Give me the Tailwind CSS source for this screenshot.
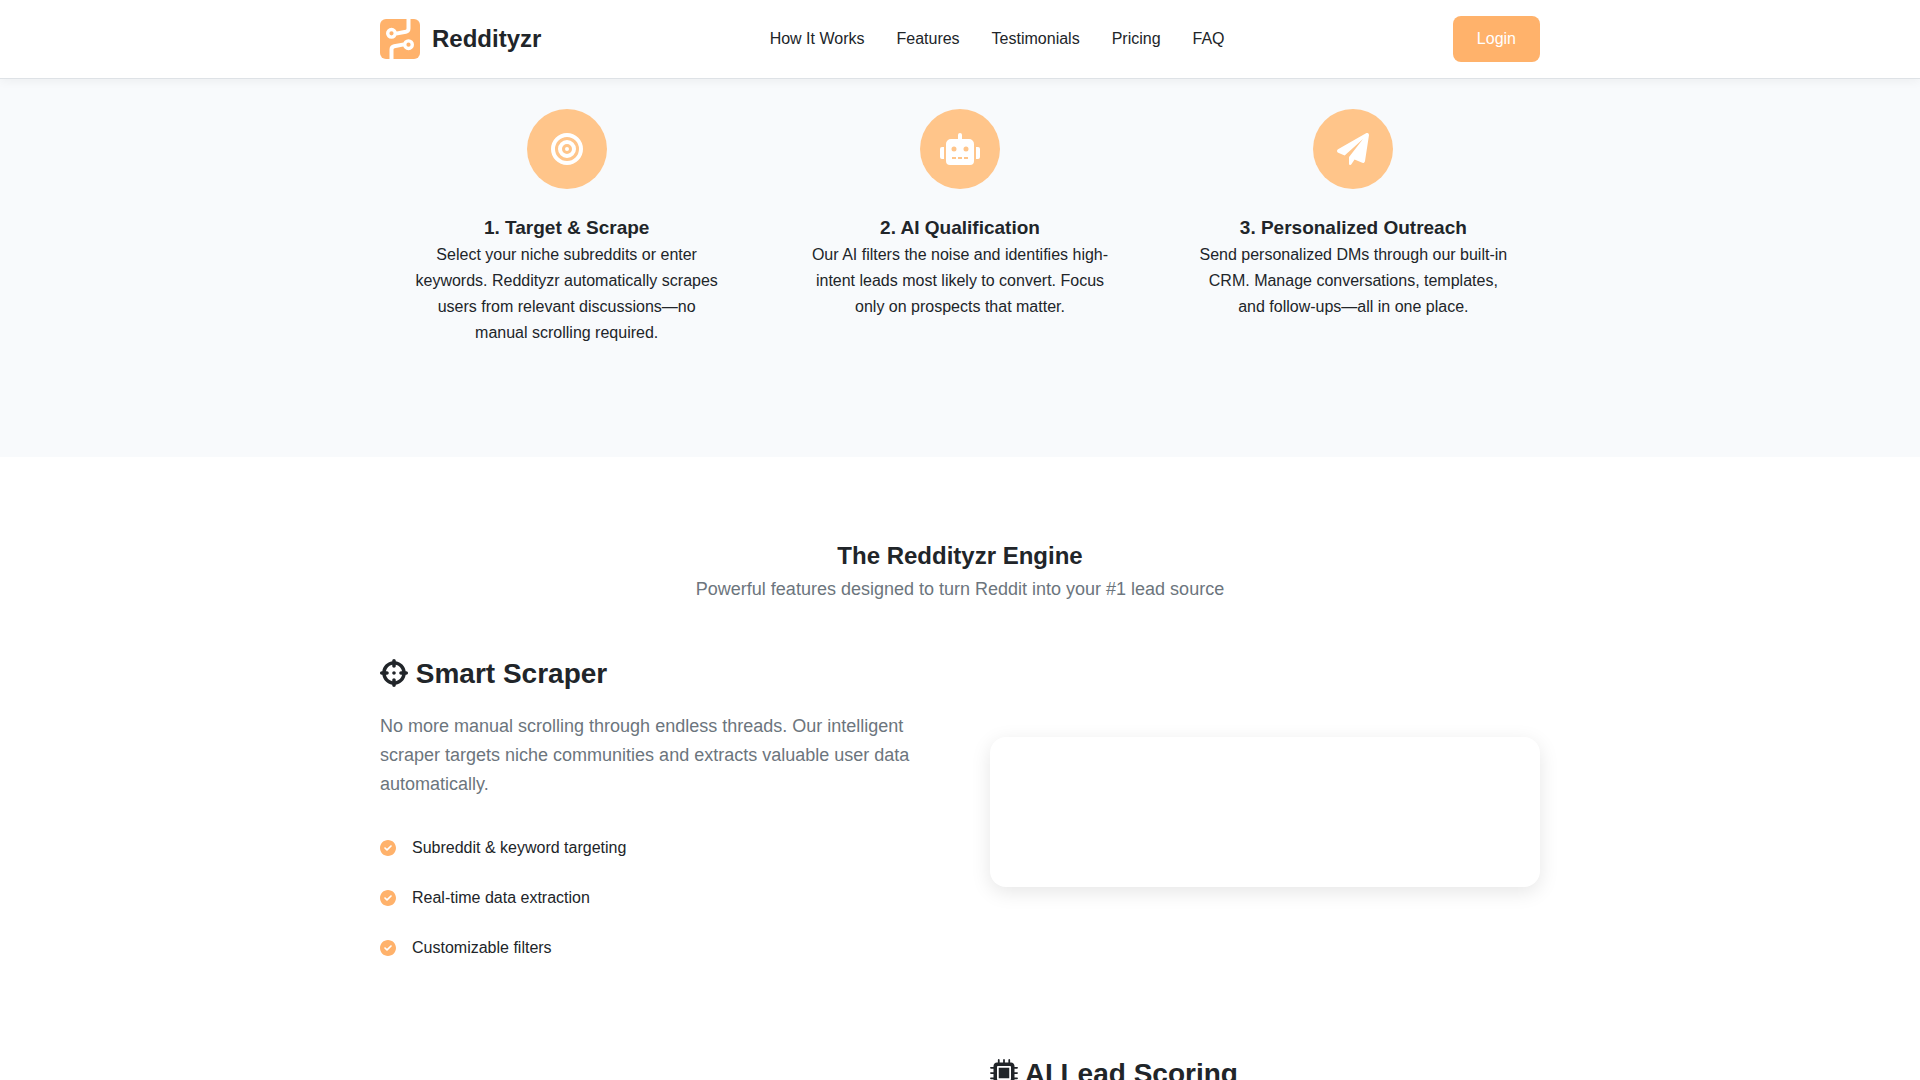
<!DOCTYPE html>
<html lang="en">
<head>
    <meta charset="UTF-8">
    <meta name="viewport" content="width=device-width, initial-scale=1.0">
    <title>Reddityzr</title>
    <script src="https://cdn.jsdelivr.net/npm/@tailwindcss/browser@4"></script>
</head>
<body class="bg-white text-[#212529] text-base leading-[26px] font-['Liberation_Sans',Arial,sans-serif]">

    <!-- Header -->
    <header class="sticky top-0 z-10 bg-white border-b border-[#dee2e6] shadow-[0_2px_10px_rgba(0,0,0,0.05)]">
        <div class="max-w-[1200px] mx-auto px-5 py-4 flex items-center justify-between">
            <a href="#" class="flex items-center gap-3 text-2xl font-bold">
                <svg class="w-10 h-10" viewBox="0 0 40 40" fill="none" aria-hidden="true">
                    <rect width="40" height="40" rx="6" fill="#ffb26b"/>
                    <g stroke="#fff" stroke-width="4">
                        <path d="M28.5 0V9.5Q28.5 12.2 25.8 12.8L16 14.6"/>
                        <circle cx="11.5" cy="14.3" r="3.8" stroke-width="3.4"/>
                        <path d="M11.5 40V30.5Q11.5 27.8 14.2 27.2L24 25.4"/>
                        <circle cx="28.5" cy="25.7" r="3.8" stroke-width="3.4"/>
                    </g>
                </svg>
                <span>Reddityzr</span>
            </a>
            <nav class="flex gap-8">
                <a href="#how" class="hover:text-[#ffb26b]">How It Works</a>
                <a href="#features" class="hover:text-[#ffb26b]">Features</a>
                <a href="#testimonials" class="hover:text-[#ffb26b]">Testimonials</a>
                <a href="#pricing" class="hover:text-[#ffb26b]">Pricing</a>
                <a href="#faq" class="hover:text-[#ffb26b]">FAQ</a>
            </nav>
            <a href="#login" class="bg-[#ffb26b] text-white rounded-lg px-6 py-[10px]">Login</a>
        </div>
    </header>

    <!-- How it works -->
    <section id="how" class="bg-[#f8fafc] pt-[30px] pb-[91px]">
        <div class="max-w-[1200px] mx-auto px-5 grid grid-cols-3 gap-5 text-center">
            <div class="px-8 pb-5">
                <div class="w-20 h-20 mx-auto mb-6 rounded-full bg-[#ffc58a] text-white flex items-center justify-center">
                    <svg class="h-8 w-8" viewBox="0 0 512 512" fill="currentColor" aria-hidden="true"><path d="M448 256A192 192 0 1 0 64 256a192 192 0 1 0 384 0zM0 256a256 256 0 1 1 512 0A256 256 0 1 1 0 256zm256 80a80 80 0 1 0 0-160 80 80 0 1 0 0 160zm0-224a144 144 0 1 1 0 288 144 144 0 1 1 0-288zM224 256a32 32 0 1 1 64 0 32 32 0 1 1 -64 0z"/></svg>
                </div>
                <h3 class="text-[19px] leading-[29px] font-bold">1. Target &amp; Scrape</h3>
                <p>Select your niche subreddits or enter keywords. Reddityzr automatically scrapes users from relevant discussions—no manual scrolling required.</p>
            </div>
            <div class="px-8 pb-5">
                <div class="w-20 h-20 mx-auto mb-6 rounded-full bg-[#ffc58a] text-white flex items-center justify-center">
                    <svg class="h-8 w-10" viewBox="0 0 640 512" fill="currentColor" aria-hidden="true"><path d="M32 224H64V416H32A32 32 0 0 1 0 384V256A32 32 0 0 1 32 224Zm512-48V448a64 64 0 0 1-64 64H160a64 64 0 0 1-64-64V176a80 80 0 0 1 80-80H288V32a32 32 0 0 1 64 0V96H464A80 80 0 0 1 544 176ZM264 256a40 40 0 1 0-40 40A40 40 0 0 0 264 256Zm-8 128H192v32h64Zm96 0H288v32h64ZM456 256a40 40 0 1 0-40 40A40 40 0 0 0 456 256Zm-8 128H384v32h64ZM640 256V384a32 32 0 0 1-32 32H576V224h32A32 32 0 0 1 640 256Z"/></svg>
                </div>
                <h3 class="text-[19px] leading-[29px] font-bold">2. AI Qualification</h3>
                <p>Our AI filters the noise and identifies high-intent leads most likely to convert. Focus only on prospects that matter.</p>
            </div>
            <div class="px-8 pb-5">
                <div class="w-20 h-20 mx-auto mb-6 rounded-full bg-[#ffc58a] text-white flex items-center justify-center">
                    <svg class="h-8 w-8" viewBox="0 0 512 512" fill="currentColor" aria-hidden="true"><path d="M511.6 36.86l-64 415.1c-1.5 9.734-7.375 18.22-15.97 23.05c-4.844 2.719-10.27 4.097-15.68 4.097c-4.188 0-8.319-.8154-12.29-2.472l-122.6-51.1l-50.86 76.29C226.3 508.5 219.8 512 212.8 512C201.3 512 192 502.7 192 491.2v-96.18c0-7.115 2.372-14.03 6.742-19.64L416 96l-293.7 264.3L19.69 317.5C8.438 312.8 .8125 302.2 .0625 289.1s5.469-23.72 16.06-29.77l448-255.1c10.69-6.109 23.88-5.547 34 1.406S513.5 24.72 511.6 36.86z"/></svg>
                </div>
                <h3 class="text-[19px] leading-[29px] font-bold">3. Personalized Outreach</h3>
                <p>Send personalized DMs through our built-in CRM. Manage conversations, templates, and follow-ups—all in one place.</p>
            </div>
        </div>
    </section>

    <!-- Features -->
    <section id="features" class="pt-20">
        <div class="max-w-[1200px] mx-auto px-5">
            <div class="text-center mb-[47px]">
                <h2 class="text-2xl leading-[38px] font-bold">The Reddityzr Engine</h2>
                <p class="text-lg leading-[29px] text-[#6c757d]">Powerful features designed to turn Reddit into your #1 lead source</p>
            </div>

            <div class="grid grid-cols-2 gap-[60px] items-center mb-[78px]">
                <div>
                    <h3 class="text-[28px] leading-[45px] font-bold mb-4">
                        <svg class="inline-block w-7 h-7 align-[-4px]" viewBox="0 0 512 512" fill="currentColor" aria-hidden="true"><path d="M224 256C224 238.3 238.3 224 256 224C273.7 224 288 238.3 288 256C288 273.7 273.7 288 256 288C238.3 288 224 273.7 224 256zM256 0C273.7 0 288 14.33 288 32V42.35C381.7 56.27 455.7 130.3 469.6 224H480C497.7 224 512 238.3 512 256C512 273.7 497.7 288 480 288H469.6C455.7 381.7 381.7 455.7 288 469.6V480C288 497.7 273.7 512 256 512C238.3 512 224 497.7 224 480V469.6C130.3 455.7 56.27 381.7 42.35 288H32C14.33 288 0 273.7 0 256C0 238.3 14.33 224 32 224H42.35C56.27 130.3 130.3 56.27 224 42.35V32C224 14.33 238.3 0 256 0V0zM224 404.6V384C224 366.3 238.3 352 256 352C273.7 352 288 366.3 288 384V404.6C346.3 392.1 392.1 346.3 404.6 288H384C366.3 288 352 273.7 352 256C352 238.3 366.3 224 384 224H404.6C392.1 165.7 346.3 119.9 288 107.4V128C288 145.7 273.7 160 256 160C238.3 160 224 145.7 224 128V107.4C165.7 119.9 119.9 165.7 107.4 224H128C145.7 224 160 238.3 160 256C160 273.7 145.7 288 128 288H107.4C119.9 346.3 165.7 392.1 224 404.6z"/></svg>
                        Smart Scraper
                    </h3>
                    <p class="text-lg leading-[29px] text-[#6c757d] mb-6">No more manual scrolling through endless threads. Our intelligent scraper targets niche communities and extracts valuable user data automatically.</p>
                    <ul>
                        <li class="flex items-center gap-4 py-3">
                            <svg class="w-4 h-4 text-[#ffb26b]" viewBox="0 0 512 512" fill="currentColor" aria-hidden="true"><path d="M0 256C0 114.6 114.6 0 256 0C397.4 0 512 114.6 512 256C512 397.4 397.4 512 256 512C114.6 512 0 397.4 0 256zM371.8 211.8C382.7 200.9 382.7 183.1 371.8 172.2C360.9 161.3 343.1 161.3 332.2 172.2L224 280.4L179.8 236.2C168.9 225.3 151.1 225.3 140.2 236.2C129.3 247.1 129.3 264.9 140.2 275.8L204.2 339.8C215.1 350.7 232.9 350.7 243.8 339.8L371.8 211.8z"/></svg>
                            Subreddit &amp; keyword targeting
                        </li>
                        <li class="flex items-center gap-4 py-3">
                            <svg class="w-4 h-4 text-[#ffb26b]" viewBox="0 0 512 512" fill="currentColor" aria-hidden="true"><path d="M0 256C0 114.6 114.6 0 256 0C397.4 0 512 114.6 512 256C512 397.4 397.4 512 256 512C114.6 512 0 397.4 0 256zM371.8 211.8C382.7 200.9 382.7 183.1 371.8 172.2C360.9 161.3 343.1 161.3 332.2 172.2L224 280.4L179.8 236.2C168.9 225.3 151.1 225.3 140.2 236.2C129.3 247.1 129.3 264.9 140.2 275.8L204.2 339.8C215.1 350.7 232.9 350.7 243.8 339.8L371.8 211.8z"/></svg>
                            Real-time data extraction
                        </li>
                        <li class="flex items-center gap-4 py-3">
                            <svg class="w-4 h-4 text-[#ffb26b]" viewBox="0 0 512 512" fill="currentColor" aria-hidden="true"><path d="M0 256C0 114.6 114.6 0 256 0C397.4 0 512 114.6 512 256C512 397.4 397.4 512 256 512C114.6 512 0 397.4 0 256zM371.8 211.8C382.7 200.9 382.7 183.1 371.8 172.2C360.9 161.3 343.1 161.3 332.2 172.2L224 280.4L179.8 236.2C168.9 225.3 151.1 225.3 140.2 236.2C129.3 247.1 129.3 264.9 140.2 275.8L204.2 339.8C215.1 350.7 232.9 350.7 243.8 339.8L371.8 211.8z"/></svg>
                            Customizable filters
                        </li>
                    </ul>
                </div>
                <div class="h-[150px] rounded-2xl bg-white shadow-[0_5px_20px_rgba(0,0,0,0.1)]"></div>
            </div>

            <div class="grid grid-cols-2 gap-[60px]">
                <div class="col-start-2">
                    <h3 class="text-[28px] leading-[45px] font-bold">
                        <svg class="inline-block w-7 h-7 align-[-4px]" viewBox="0 0 512 512" fill="currentColor" aria-hidden="true"><path d="M160 352h192V160H160V352zM448 176h48C504.8 176 512 168.8 512 160s-7.162-16-16-16H448V128c0-35.35-28.65-64-64-64h-16V16C368 7.164 360.8 0 352 0c-8.836 0-16 7.164-16 16V64h-64V16C272 7.164 264.8 0 256 0C247.2 0 240 7.164 240 16V64h-64V16C176 7.164 168.8 0 160 0C151.2 0 144 7.164 144 16V64H128C92.65 64 64 92.65 64 128v16H16C7.164 144 0 151.2 0 160s7.164 16 16 16H64v64H16C7.164 240 0 247.2 0 256s7.164 16 16 16H64v64H16C7.164 336 0 343.2 0 352s7.164 16 16 16H64V384c0 35.35 28.65 64 64 64h16v48C144 504.8 151.2 512 160 512c8.838 0 16-7.164 16-16V448h64v48c0 8.836 7.164 16 16 16c8.838 0 16-7.164 16-16V448h64v48c0 8.836 7.164 16 16 16c8.838 0 16-7.164 16-16V448H384c35.35 0 64-28.65 64-64v-16h48c8.838 0 16-7.164 16-16s-7.162-16-16-16H448v-64h48C504.8 272 512 264.8 512 256s-7.162-16-16-16H448V176zM384 368c0 8.836-7.162 16-16 16h-224C135.2 384 128 376.8 128 368v-224C128 135.2 135.2 128 144 128h224C376.8 128 384 135.2 384 144V368z"/></svg>
                        AI Lead Scoring
                    </h3>
                </div>
            </div>
        </div>
    </section>

</body>
</html>
